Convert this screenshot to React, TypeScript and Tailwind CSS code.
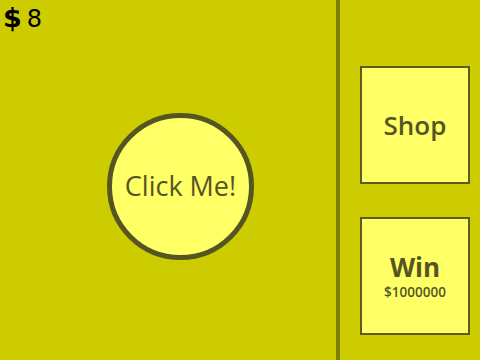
import React, { useState } from 'react';

const App: React.FC = () => {
  const [money, setMoney] = useState(8);

  return (
    <div className="flex w-[480px] h-[360px] bg-[#cccc00] overflow-hidden" style={{ fontFamily: '"Open Sans", "Noto Sans", sans-serif' }}>
      {/* Clicker area */}
      <div className="w-[336px] flex flex-col">
        <div className="flex items-baseline gap-[5px] pl-[3px] h-[36px] text-black" style={{ fontFamily: '"DejaVu Sans", sans-serif' }}>
          <span className="text-[27px] leading-[36px] font-bold">$</span>
          <span className="text-[24px] leading-[36px]">{money}</span>
        </div>
        <div className="pl-[107px] pt-[77px]">
          <button
            onClick={() => setMoney(money + 1)}
            className="w-[147px] h-[147px] rounded-full bg-[#ffff66] border-[5px] border-[#555522] flex items-center justify-center text-[27px] font-medium text-[#555522]"
          >
            Click Me!
          </button>
        </div>
      </div>

      {/* Divider */}
      <div className="w-[4px] bg-[#808000]" />

      {/* Side menu */}
      <div className="flex flex-col pl-[20px] pt-[66px] gap-[33px]">
        <div className="w-[110px] h-[118px] bg-[#ffff66] border-2 border-[#5c5c1f] flex items-center justify-center text-[26px] font-semibold text-[#555522]">
          Shop
        </div>
        <div className="w-[110px] h-[118px] bg-[#ffff66] border-2 border-[#5c5c1f] flex flex-col items-center justify-center text-[#555522]">
          <span className="text-[26px] font-bold leading-[32px]">Win</span>
          <span className="text-[13.5px] font-semibold leading-[18px]">$1000000</span>
        </div>
      </div>
    </div>
  );
};

export default App;
